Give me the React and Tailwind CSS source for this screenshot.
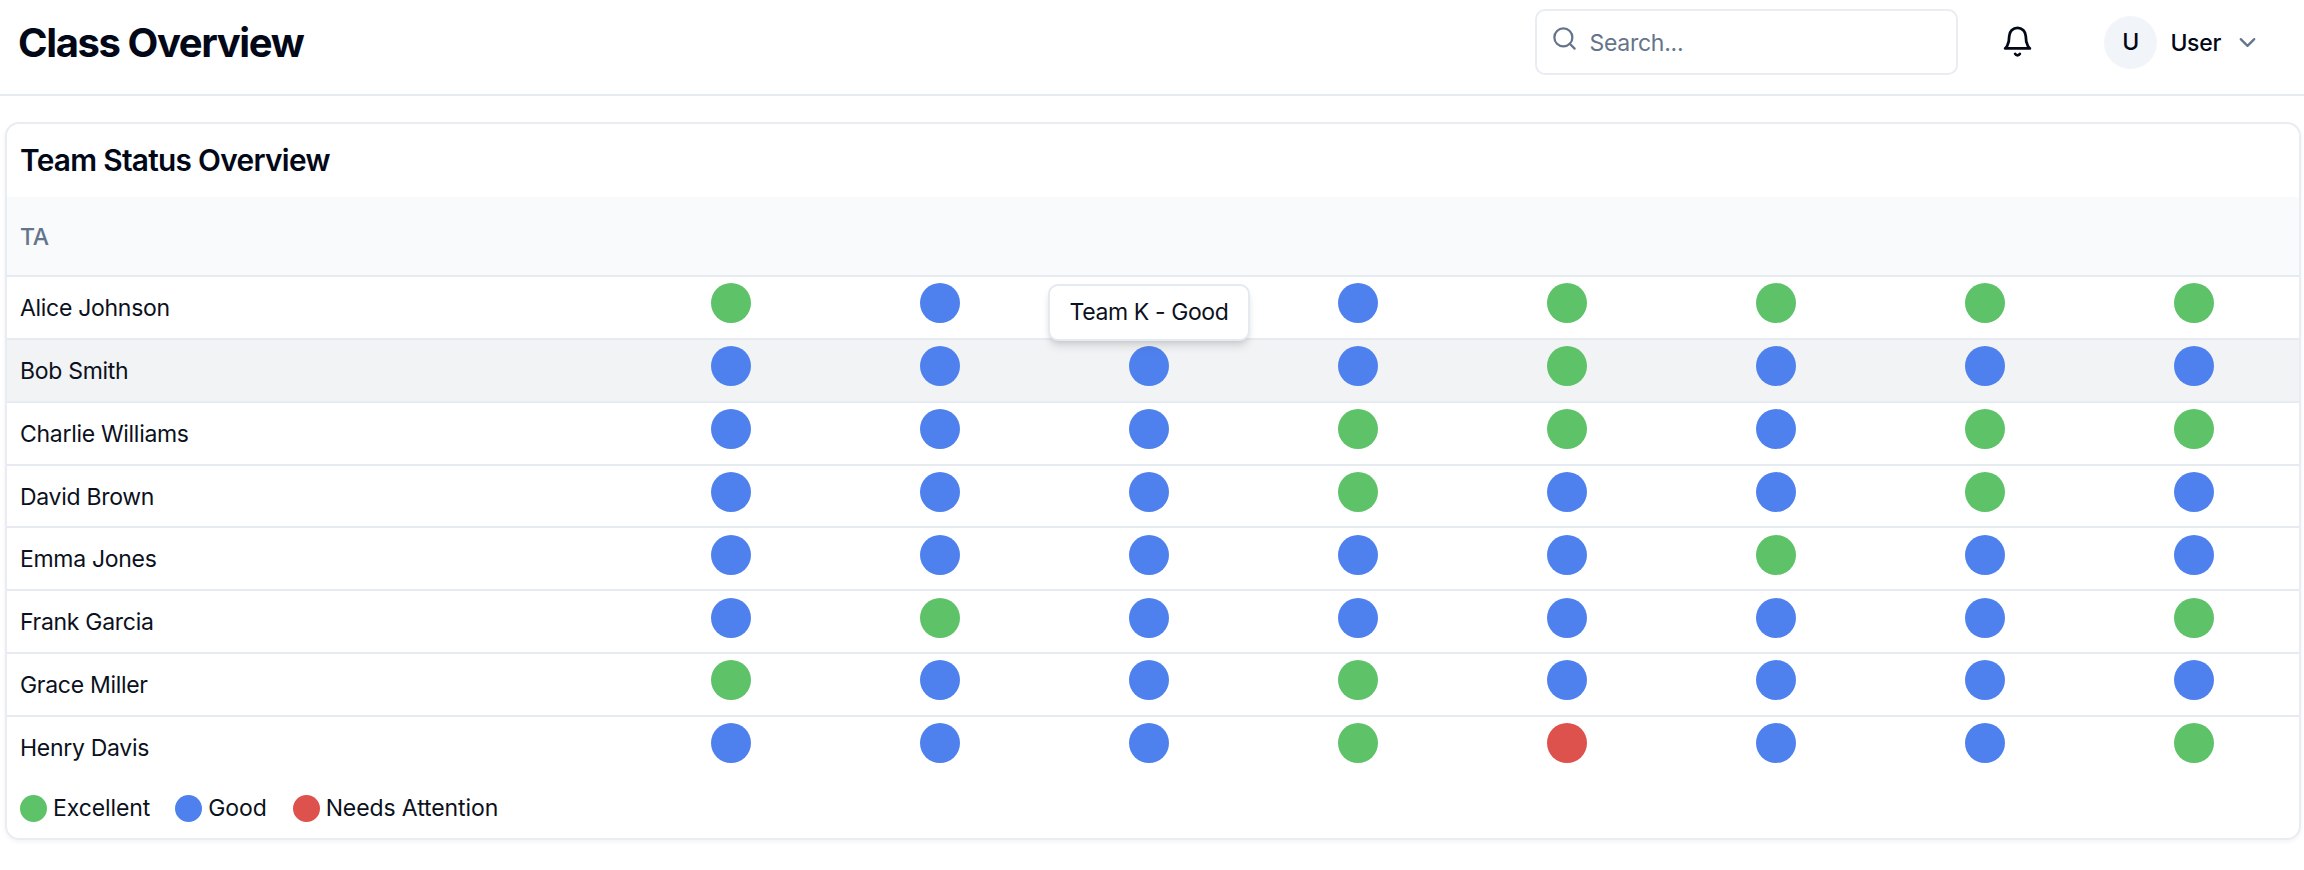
import React from "react";

const STATUS_COLOR = { e: "bg-[#5ec269]", g: "bg-[#4f81ee]", n: "bg-[#dd524c]" };

// "-" marks the team whose dot is covered by its open tooltip.
const ROWS = [
  ["Alice Johnson", "eg-geeee"],
  ["Bob Smith", "ggggeggg"],
  ["Charlie Williams", "gggeegee"],
  ["David Brown", "gggeggeg"],
  ["Emma Jones", "gggggegg"],
  ["Frank Garcia", "geggggge"],
  ["Grace Miller", "eggegggg"],
  ["Henry Davis", "gggengge"],
];

const LEGEND = [
  ["e", "Excellent", "mr-[25px]"],
  ["g", "Good", "mr-[26px]"],
  ["n", "Needs Attention", ""],
];

function Icon({ className, children }) {
  return (
    <svg viewBox="0 0 24 24" fill="none" stroke="currentColor" strokeWidth="2" strokeLinecap="round" strokeLinejoin="round" className={className}>
      {children}
    </svg>
  );
}

function Header() {
  return (
    <header className="flex h-24 items-start border-b-2 border-[#e6ebf1] pl-[18px] pr-[43px]">
      <h1 className="mt-[23px] text-[40px] leading-10 font-bold tracking-[-1.4px] whitespace-nowrap">Class Overview</h1>
      <div className="mt-[9px] ml-auto flex h-[66px] w-[423px] rounded-[10px] border-2 border-[#e8edf3] pl-[14px]">
        <Icon className="mt-[14px] size-[27px] text-[#64748b]">
          <circle cx="11" cy="11" r="8" />
          <path d="m21 21-4.3-4.3" />
        </Icon>
        <span className="ml-[11px] pt-[2px] self-center text-[23px] leading-8 tracking-[-0.25px] text-[#64748b]">Search...</span>
      </div>
      <Icon className="mt-[25px] ml-[43px] size-[33px]">
        <path d="M6 8a6 6 0 0 1 12 0c0 7 3 9 3 9H3s3-2 3-9" />
        <path d="M10.3 21a1.94 1.94 0 0 0 3.4 0" />
      </Icon>
      <div className="mt-4 ml-[70px] flex h-[53px] items-center">
        <div className="flex size-[53px] items-center justify-center rounded-full bg-[#f1f5f9] text-[23px] font-medium">U</div>
        <span className="ml-[13px] text-[23px] leading-8 font-medium tracking-[-0.3px]">User</span>
        <Icon className="ml-[13px] size-[27px] text-[#64748b]">
          <path d="m6 9 6 6 6-6" />
        </Icon>
      </div>
    </header>
  );
}

function StatusRow({ name, statuses, active, last }) {
  return (
    <div className={"flex h-[62.86px] " + (active ? "bg-[#f2f3f5] " : "") + (last ? "" : "border-b-2 border-[#e6ebf1]")}>
      <div className="w-[619.3px] flex-none pt-[15px] pl-[13px] text-[23px] leading-8 tracking-[-0.3px] text-[#0b1120]">{name}</div>
      <div className="grid flex-1 grid-cols-8">
        {statuses.split("").map((s, i) => (
          <div key={i} className="relative flex justify-center pt-[6.3px]">
            {s === "-" ? (
              <div className="absolute top-[7px] left-1/2 z-10 flex h-[57px] w-[202px] -translate-x-1/2 items-center justify-center rounded-[10px] border-2 border-[#e4eaf1] bg-white text-[23px] tracking-[-0.4px] whitespace-nowrap text-[#0b1120] shadow-[0_7px_10px_-2px_rgba(0,0,0,0.12),0_3px_6px_-3px_rgba(0,0,0,0.12)]">
                Team K - Good
              </div>
            ) : (
              <div className={"size-10 rounded-full " + STATUS_COLOR[s]} />
            )}
          </div>
        ))}
      </div>
    </div>
  );
}

export default function App() {
  return (
    <div className="h-[870px] w-[2304px] overflow-hidden bg-white font-['Inter',sans-serif] text-[#020817]">
      <Header />
      <main className="mt-[26px] ml-[5px] h-[718px] w-[2296px] rounded-[14px] border-2 border-[#e8edf3] shadow-[0_2px_4px_rgba(0,0,0,0.05)]">
        <div className="flex h-[73px] items-center pb-[1px] pl-[13px]">
          <h2 className="text-[29.8px] leading-10 font-semibold tracking-[-0.7px]">Team Status Overview</h2>
        </div>
        <div className="flex h-[80px] items-center border-b-2 border-[#e6ebf1] bg-[#f8fafc] pt-[2px] pl-[13px] text-[23px] font-medium tracking-[-0.3px] text-[#64748b]">TA</div>
        <div>
          {ROWS.map(([name, statuses], i) => (
            <StatusRow key={name} name={name} statuses={statuses} active={i === 1} last={i === 7} />
          ))}
        </div>
        <div className="flex h-[57px] items-center pl-[13px] text-[23px] tracking-[-0.1px] text-[#0b1120]">
          {LEGEND.map(([s, label, gap]) => (
            <div key={s} className={"flex items-center gap-[6px] " + gap}>
              <span className={"size-[27px] rounded-full " + STATUS_COLOR[s]} />
              <span>{label}</span>
            </div>
          ))}
        </div>
      </main>
    </div>
  );
}
